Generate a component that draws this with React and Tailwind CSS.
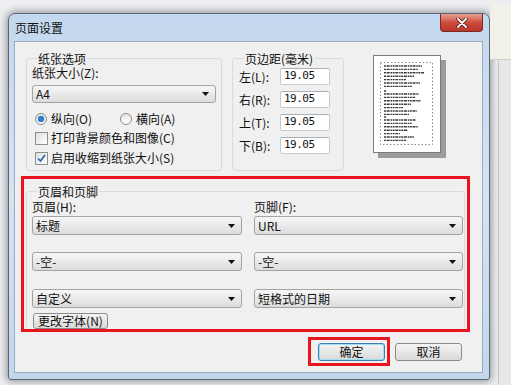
import React from 'react';

const FONT = "font-['Noto_Sans_CJK_SC','Noto_Sans',sans-serif]";

const Arrow = () => (
    <svg width="7" height="4" viewBox="0 0 7 4">
        <path d="M0 0 H7 L3.5 4 Z" fill="#111" />
    </svg>
);

const Select = ({ w, h = 19, children }) => (
    <div
        className="flex items-center justify-between rounded-[3px] border border-[#a3a3a3] bg-linear-to-b from-[#f7f7f7] to-[#dcdcdc] pl-[3px] pr-[6px] text-[12px] leading-none text-[#111]"
        style={{ width: w, height: h }}
    >
        <span>{children}</span>
        <Arrow />
    </div>
);

const Button = ({ w, h = 18, focused, children }) => (
    <div
        className={`flex items-center justify-center rounded-[3px] border bg-linear-to-b from-[#f4f4f4] to-[#dadada] text-[12px] leading-none text-[#111] ${
            focused ? 'border-[#3c7fb1] shadow-[inset_0_0_0_1px_#9fe0f5]' : 'border-[#8a8a8a]'
        }`}
        style={{ width: w, height: h }}
    >
        {children}
    </div>
);

const Radio = ({ checked }) => (
    <div className="flex h-[12px] w-[12px] items-center justify-center rounded-full border border-[#8b8b8b] bg-linear-to-b from-[#e6e6e6] to-[#ffffff]">
        {checked && <div className="h-[6px] w-[6px] rounded-full bg-[#2f7fd4] shadow-[0_0_1px_#1b4f9c]" />}
    </div>
);

const Checkbox = ({ checked }) => (
    <div className="flex h-[13px] w-[13px] items-center justify-center border border-[#8e8f8f] bg-linear-to-br from-[#dedede] to-[#ffffff]">
        {checked && (
            <svg width="9" height="9" viewBox="0 0 9 9">
                <path d="M1 4.5 L3.5 7 L8 1" fill="none" stroke="#2b5fa8" strokeWidth="1.6" />
            </svg>
        )}
    </div>
);

const GroupBox = ({ title, className, children }) => (
    <div className={`rounded-[3px] border border-[#d5dde3] ${className}`}>
        <div className="-mt-[6px] ml-[5px] w-fit bg-[#f0f0f0] px-[1px] text-[12px] leading-[12px] text-[#111]">
            {title}
        </div>
        {children}
    </div>
);

const MarginRow = ({ label, first }) => (
    <div className={`flex items-center ${first ? 'mt-[3px]' : 'mt-[6px]'}`}>
        <span className="w-[41px] text-[12px] leading-none text-[#111]">{label}</span>
        <div className="flex h-[17px] w-[50px] items-center rounded-[2px] border border-[#c6cbd1] border-t-[#aab0b8] bg-white pl-[3px] font-['DejaVu_Sans_Mono',monospace] text-[11px] tracking-[-0.5px] text-[#111]">
            19.05
        </div>
    </div>
);

// little page preview with fake text lines
const PagePreview = () => {
    const blocks = [10, 38, 64];
    const widths = [38, 34, 40, 30, 22, 36, 28];
    return (
        <div className="-mt-[3px] h-[98px] w-[68px] border border-[#7a7a7a] bg-white shadow-[5px_5px_0_#9b9b9b]">
            <svg width="66" height="96" viewBox="0 0 66 96">
                <rect x="6.5" y="6.5" width="52" height="82" fill="none" stroke="#8a8a8a" strokeDasharray="1.5 2" />
                {blocks.map((by, b) =>
                    widths.map((wd, i) => (
                        <line
                            key={`${b}-${i}`}
                            x1="10"
                            x2={10 + wd - (b * 3) % 7}
                            y1={by + i * 3.4}
                            y2={by + i * 3.4}
                            stroke="#3a3a3a"
                            strokeWidth="1.4"
                            strokeDasharray="2 0.7 3 0.8 1.5 0.6"
                        />
                    ))
                )}
                <line x1="10" x2="12" y1="35" y2="35" stroke="#3a3a3a" strokeWidth="1.4" />
                <line x1="10" x2="12" y1="61" y2="61" stroke="#3a3a3a" strokeWidth="1.4" />
            </svg>
        </div>
    );
};

export default function App() {
    return (
        <div className={`flex h-[385px] w-[511px] overflow-hidden bg-[#eceef1] ${FONT}`}>
            {/* dialog window */}
            <div className="ml-[8px] mt-[13px] h-[367px] w-[482px] shrink-0 rounded-t-[7px] rounded-b-[3px] border border-[#5b6470] bg-linear-to-b from-[#c3d8ee] via-[#d3e4f5] to-[#c2d7ec] shadow-[0_0_7px_2px_rgba(0,0,0,0.35)]">
                {/* title bar */}
                <div className="flex h-[27px] items-start justify-between">
                    <span className="ml-[6px] mt-[8px] text-[12px] leading-[12px] text-[#111]">页面设置</span>
                    <div className="mr-[6px] flex h-[18px] w-[43px] items-center justify-center rounded-b-[4px] border border-t-0 border-[#7a2a22] bg-linear-to-b from-[#e3a193] via-[#cc4b3a] to-[#b8372a]">
                        <svg width="12" height="10" viewBox="0 0 12 10">
                            <path d="M2 1 L10 9 M10 1 L2 9" stroke="#4d1a14" strokeWidth="3.4" strokeLinecap="round" />
                            <path d="M2 1 L10 9 M10 1 L2 9" stroke="#ffffff" strokeWidth="1.8" strokeLinecap="round" />
                        </svg>
                    </div>
                </div>

                {/* client area */}
                <div className="ml-[5px] h-[332px] w-[469px] border border-[#9aabbd] bg-[#f0f0f0]">
                    {/* top row */}
                    <div className="flex items-start pl-[11px] pt-[16px]">
                        <GroupBox title="纸张选项" className="h-[113px] w-[196px] pl-[5px]">
                            <div className="mt-[2px] text-[12px] leading-[12px] text-[#111]">纸张大小(Z):</div>
                            <div className="mt-[6px]">
                                <Select w={184} h={18}>A4</Select>
                            </div>
                            <div className="mt-[9px] flex h-[14px] items-center pl-[3px] text-[12px] text-[#111]">
                                <Radio checked />
                                <span className="ml-[4px] w-[69px]">纵向(O)</span>
                                <Radio />
                                <span className="ml-[4px]">横向(A)</span>
                            </div>
                            <div className="mt-[5px] flex h-[14px] items-center pl-[3px] text-[12px] text-[#111]">
                                <Checkbox />
                                <span className="ml-[3px]">打印背景颜色和图像(C)</span>
                            </div>
                            <div className="mt-[6px] flex h-[14px] items-center pl-[3px] text-[12px] text-[#111]">
                                <Checkbox checked />
                                <span className="ml-[3px]">启用收缩到纸张大小(S)</span>
                            </div>
                        </GroupBox>

                        <GroupBox title="页边距(毫米)" className="ml-[10px] h-[113px] w-[112px] pl-[6px]">
                            <MarginRow label="左(L):" first />
                            <MarginRow label="右(R):" />
                            <MarginRow label="上(T):" />
                            <MarginRow label="下(B):" />
                        </GroupBox>

                        <div className="ml-[29px]">
                            <PagePreview />
                        </div>
                    </div>

                    {/* header / footer, highlighted */}
                    <div className="ml-[6px] mt-[5px] h-[156px] w-[449px] border-[3px] border-[#e8141e] px-[2px] pt-[12px]">
                        <GroupBox title="页眉和页脚" className="h-[138px] border-b-0 pl-[5px]">
                            <div className="flex">
                                <div className="w-[210px]">
                                    <div className="mt-[3px] text-[12px] leading-[12px] text-[#111]">页眉(H):</div>
                                    <div className="mt-[3px]"><Select w={210}>标题</Select></div>
                                    <div className="mt-[17px]"><Select w={210}>-空-</Select></div>
                                    <div className="mt-[18px]"><Select w={210}>自定义</Select></div>
                                </div>
                                <div className="ml-[12px] w-[209px]">
                                    <div className="mt-[3px] text-[12px] leading-[12px] text-[#111]">页脚(F):</div>
                                    <div className="mt-[3px]"><Select w={209}>URL</Select></div>
                                    <div className="mt-[17px]"><Select w={209}>-空-</Select></div>
                                    <div className="mt-[18px]"><Select w={209}>短格式的日期</Select></div>
                                </div>
                            </div>
                            <div className="ml-[1px] mt-[5px]">
                                <Button w={75} h={16}>更改字体(N)</Button>
                            </div>
                        </GroupBox>
                    </div>

                    {/* bottom buttons */}
                    <div className="mr-[20px] mt-[5px] flex items-start justify-end">
                        <div className="border-[3px] border-[#e8141e] pb-[2px] pl-[7px] pr-[2px] pt-[3px]">
                            <Button w={67} focused>确定</Button>
                        </div>
                        <div className="ml-[5px] mt-[6px]">
                            <Button w={67}>取消</Button>
                        </div>
                    </div>
                </div>
            </div>

            {/* background window behind */}
            <div className="mt-[4px] flex flex-1 flex-col">
                <div className="h-[56px] border-b border-[#cfcfc6] bg-[#f2f1e9]" />
                <div className="ml-[8px] flex-1 border-l border-[#c4c4c4] bg-[#e7e7e7]" />
            </div>
        </div>
    );
}
